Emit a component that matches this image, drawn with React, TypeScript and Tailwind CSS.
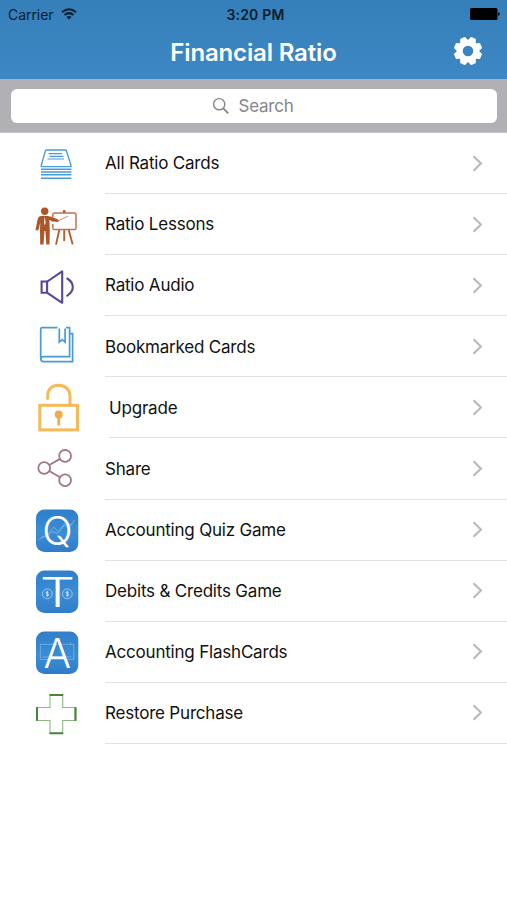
import React, { ReactNode } from 'react';

interface MenuItem {
  label: string;
  icon: ReactNode;
  indent?: boolean;
}

function Icon({ children }: { children: ReactNode }) {
  return (
    <svg width="48" height="56" viewBox="0 0 48 56" fill="none" className="shrink-0">
      {children}
    </svg>
  );
}

function Tile({ id, children }: { id: string; children: ReactNode }) {
  return (
    <Icon>
      <defs>
        <linearGradient id={id} x1="0" y1="0" x2="0" y2="1">
          <stop offset="0" stopColor="#2f7fca" />
          <stop offset="0.55" stopColor="#3b8dd6" />
          <stop offset="1" stopColor="#2f7dc8" />
        </linearGradient>
      </defs>
      <rect x="4" y="7.5" width="42.3" height="42.5" rx="8.5" fill={`url(#${id})`} />
      {children}
    </Icon>
  );
}

const CardsIcon = () => (
  <Icon>
    <g stroke="#4b9bd8" strokeWidth="1.4">
      <path d="M14.3 14h18.8q1 0 1.4 1L39 29.3v1.3H9.3v-1.3l4-14.2q.3-1.1 1-1.1z" />
      <path d="M16.5 17.6h13.5M17.5 20.3h14M15.5 23h16.5" strokeWidth="1.2" />
      <path d="M9 33.2h30.4M9 36h30.4M9 38.8h30.4M9 42.2h30.4" />
    </g>
  </Icon>
);

const LessonsIcon = () => (
  <Icon>
    <circle cx="12.7" cy="14.3" r="3.7" fill="#ad5629" />
    <path
      d="M9 19h7.5l4.5 3.4 5.6.7v1.6l-6.6-.3-2.6-1.6.4 10.2-.3 14.5h-3.2L13.4 34h-.9l-1 13.5H8.2L8 33l.3-7.5-2 7.7H3.5l2-10.5Q6.4 19 9 19z"
      fill="#ad5629"
    />
    <path d="M12.8 19.5l-.8 6 .8 3 .8-3z" fill="#fff" />
    <path
      d="M20.8 20v-2.5q0-1.6 1.6-1.6h20q1.6 0 1.6 1.6v13.5q0 1.6-1.6 1.6h-20q-1.6 0-1.6-1.6v-4"
      stroke="#bd744b"
      strokeWidth="1.5"
    />
    <path d="M17.5 20.5l8.3 3.2" stroke="#ad5629" strokeWidth="2.6" />
    <path d="M26 23.8l10.2-4.6" stroke="#bd744b" strokeWidth="0.8" />
    <path d="M27.3 33L24 47.6M32.2 33v11M36.7 33l4 14.6" stroke="#b4612f" strokeWidth="1.9" />
    <circle cx="32.2" cy="14.5" r="1.4" fill="#ad5629" />
  </Icon>
);

const AudioIcon = () => (
  <Icon>
    <g stroke="#55479a" strokeWidth="2.1">
      <path d="M9.6 23.5h5.5v11.3H9.6z" />
      <path d="M15.3 23.5L30.2 13.3v31.5L15.3 34.8" strokeLinejoin="round" />
      <path d="M35.3 20.5q5.5 3.6 5.5 8.5t-5.5 8.7" strokeLinecap="round" />
    </g>
  </Icon>
);

const BookIcon = () => (
  <Icon>
    <g stroke="#489cd6" strokeWidth="1.7">
      <path d="M25.5 8.7H10.2q-1.5 0-1.5 1.5v29.3q0 3.1 3.1 3.1h28.8V14.6h-2.8" />
      <path d="M34 8.7h3.6v29H11.5q-2.5 0-2.6 2.1" />
      <path d="M27.3 9.5v13.7l2.9-2.6 2.9 2.6V9.5" />
    </g>
  </Icon>
);

const UnlockIcon = () => (
  <Icon>
    <rect x="7.8" y="25.3" width="37.7" height="24.6" stroke="#f5b955" strokeWidth="3" />
    <path
      d="M15.7 18.6V15.5C15.7 9 20.5 5.2 26.7 5.2s11.3 4.2 11.3 10.5v8.5"
      stroke="#f5b955"
      strokeWidth="2.9"
      strokeLinecap="round"
    />
    <circle cx="26.7" cy="34.5" r="4" fill="#f2ac45" />
    <path d="M26.7 36v9.5" stroke="#f2ac45" strokeWidth="2.8" />
  </Icon>
);

const ShareIcon = () => (
  <Icon>
    <g stroke="#a2748a" strokeWidth="1.8">
      <circle cx="33.1" cy="14.9" r="5.9" />
      <circle cx="12.2" cy="27" r="5.9" />
      <circle cx="33.1" cy="39.2" r="5.9" />
      <path d="M17.3 24l10.7-6.1M17.3 30L28 36.2" />
    </g>
  </Icon>
);

const QuizIcon = () => (
  <Tile id="quiz">
    <g stroke="#7fb5e5" strokeWidth="0.8">
      <path d="M6.5 38l5-4 3 1 7-10 5 5 6-7 5 2 5-7" />
      <path d="M9 35.5l4-1 8-5 4 2 8-10 7 1" />
    </g>
    <text x="25.4" y="43" textAnchor="middle" fill="#fff" className="font-['Inter'] text-[40px] font-light">
      Q
    </text>
  </Tile>
);

const DebitsIcon = () => (
  <Tile id="debits">
    <g stroke="#a5cdf0" strokeWidth="0.9">
      <circle cx="15.3" cy="30.8" r="4.9" />
      <circle cx="35.3" cy="30.8" r="4.9" />
    </g>
    {/* coin marks */}
    <path
      d="M16.5 29.3q-2.4-1-2.4.4c0 1.4 2.6.7 2.6 2.2 0 1.3-2.6.5-2.6.5M15.3 27.8v6M36.5 29.3q-2.4-1-2.4.4c0 1.4 2.6.7 2.6 2.2 0 1.3-2.6.5-2.6.5M35.3 27.8v6"
      stroke="#d9ebfa"
      strokeWidth="0.9"
    />
    <text
      x="8"
      y="43.5"
      textLength="35"
      lengthAdjust="spacingAndGlyphs"
      fill="#fff"
      className="font-['Inter'] text-[41.5px] font-light"
    >
      T
    </text>
  </Tile>
);

const FlashCardsIcon = () => (
  <Tile id="flash">
    <g stroke="#79b3e6" strokeWidth="0.8">
      <rect x="8.3" y="20.3" width="33.5" height="15" />
      <path d="M10.5 33h29M38.5 18.5v2" />
    </g>
    <text x="25.2" y="43.5" textAnchor="middle" fill="#fff" className="font-['Inter'] text-[41px] font-light">
      A
    </text>
  </Tile>
);

const PlusIcon = () => (
  <Icon>
    <path d="M18 9.5h12.7v13h13.2v13H30.7v13H18v-13H4.8v-13H18z" stroke="#8eb987" strokeWidth="1.1" />
    <path d="M17.5 10h13.7M17.5 48.2h13.7M5 22.3v13.4M43.4 22.3v13.4" stroke="#45853a" strokeWidth="2.1" />
  </Icon>
);

const menuItems: MenuItem[] = [
  { label: 'All Ratio Cards', icon: <CardsIcon /> },
  { label: 'Ratio Lessons', icon: <LessonsIcon /> },
  { label: 'Ratio Audio', icon: <AudioIcon /> },
  { label: 'Bookmarked Cards', icon: <BookIcon /> },
  { label: 'Upgrade', icon: <UnlockIcon />, indent: true },
  { label: 'Share', icon: <ShareIcon /> },
  { label: 'Accounting Quiz Game', icon: <QuizIcon /> },
  { label: 'Debits & Credits Game', icon: <DebitsIcon /> },
  { label: 'Accounting FlashCards', icon: <FlashCardsIcon /> },
  { label: 'Restore Purchase', icon: <PlusIcon /> },
];

function StatusBar() {
  return (
    <div className="grid h-[27px] grid-cols-3 items-center pr-[7px] pl-2 text-[14px] text-[#071c2c]">
      <div className="flex items-center gap-[7px] pt-px">
        <span className="tracking-[-0.05px]">Carrier</span>
        <svg width="16" height="12" viewBox="0 0 16 12" fill="none" stroke="#071c2c" strokeWidth="2">
          <path d="M1 4.3q7-6 14 0M3.5 7q4.5-3.7 9 0" />
          <path d="M8 11.5L5.5 9q2.5-2 5 0z" fill="#071c2c" stroke="none" />
        </svg>
      </div>
      <span className="pt-px pl-[3px] text-center font-semibold tracking-[0.2px] whitespace-nowrap">3:20 PM</span>
      <svg width="30" height="12" viewBox="0 0 30 12" className="justify-self-end">
        <rect width="27.5" height="12" rx="1.5" fill="#000" />
        <path d="M28.3 4q1.5.5 1.5 2t-1.5 2z" fill="#000" />
      </svg>
    </div>
  );
}

function GearIcon() {
  const teeth = [0, 45, 90, 135, 180, 225, 270, 315];
  return (
    <svg width="30" height="30" viewBox="-15 -15 30 30">
      <g fill="#fff">
        {teeth.map((angle) => (
          <path key={angle} d="M-4.5-9L-3-13.5q.2-.7 1-.7h4q.8 0 1 .7L4.5-9z" transform={`rotate(${angle + 22.5})`} />
        ))}
      </g>
      <circle r="8.3" fill="none" stroke="#fff" strokeWidth="6" />
    </svg>
  );
}

export default function App() {
  return (
    <div className="flex h-[900px] w-[507px] flex-col overflow-hidden bg-white font-['Inter',sans-serif]">
      <header className="h-[79px] shrink-0 bg-linear-to-b from-[#3580ba] to-[#3d88c4]">
        <StatusBar />
        <div className="grid h-[48px] grid-cols-[1fr_auto_1fr] items-center px-6">
          <h1 className="col-start-2 pt-[3px] text-[24px] font-semibold tracking-[-0.15px] text-white">Financial Ratio</h1>
          <button className="justify-self-end">
            <GearIcon />
          </button>
        </div>
      </header>

      <div className="h-[54px] shrink-0 border-b border-[#c4c4c7] bg-[#b0b0b5] px-[10.5px] pt-[10px]">
        <div className="flex h-[34px] items-center justify-center gap-[9px] rounded-[6px] bg-white pr-[2px] text-[#85858a]">
          <svg width="18" height="18" viewBox="0 0 18 18" fill="none" stroke="#85858a" strokeWidth="1.4">
            <circle cx="7.2" cy="7.2" r="5.6" />
            <path d="M11.3 11.3l5 5" strokeWidth="1.9" />
          </svg>
          <span className="pt-px text-[17px] tracking-[-0.25px]">Search</span>
        </div>
      </div>

      <ul>
        {menuItems.map((item) => (
          <li key={item.label} className="flex h-[61.1px] items-center pl-8">
            {item.icon}
            <div
              className={`flex h-full flex-1 items-center justify-between border-b border-[#e2e2e4] pr-6 ${
                item.indent ? 'ml-[29px]' : 'ml-[25px]'
              }`}
            >
              <span className="pt-[2px] text-[17px] tracking-[-0.2px] text-[#111]">{item.label}</span>
              <svg width="11" height="17" viewBox="0 0 11 17" fill="none" stroke="#b8b8bc" strokeWidth="2">
                <path d="M1.5 1.2L9 8.5l-7.5 7.3" />
              </svg>
            </div>
          </li>
        ))}
      </ul>
    </div>
  );
}
